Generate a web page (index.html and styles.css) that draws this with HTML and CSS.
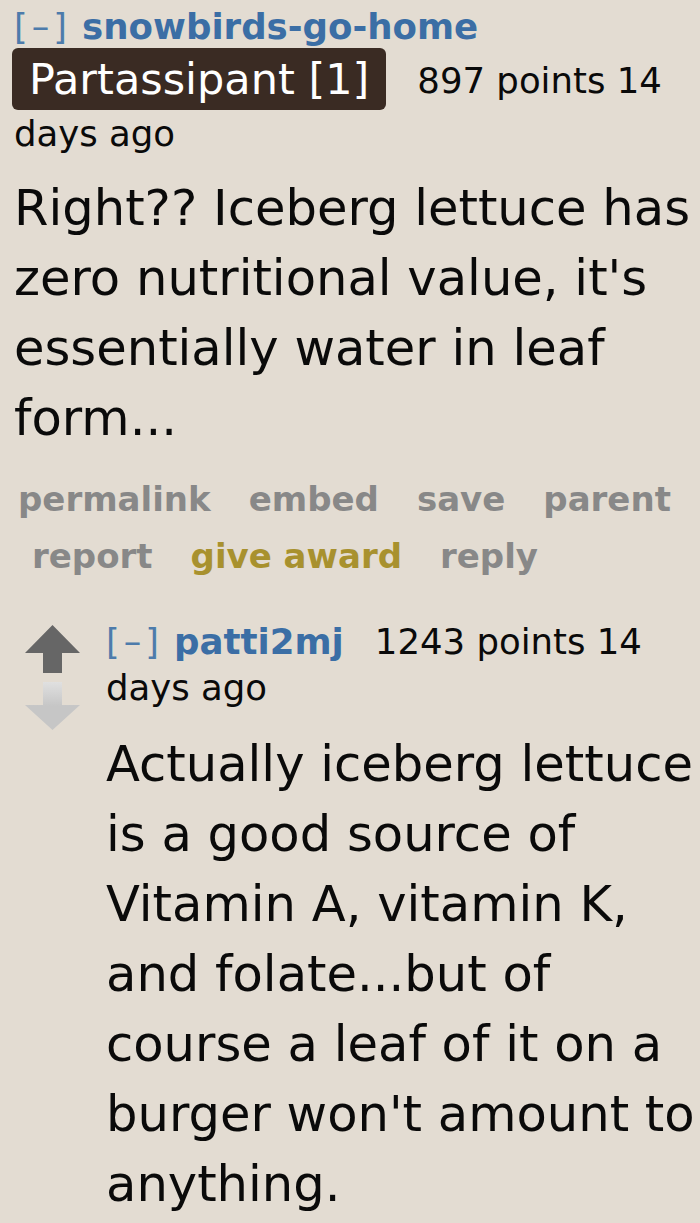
FILE: index.html
```html
<!DOCTYPE html>
<html>
<head>
<meta charset="utf-8">
<link rel="stylesheet" href="styles.css">
</head>
<body>
<div class="comment">
  <p class="tagline">
    <span class="expand">[–]</span> <span class="author">snowbirds-go-home</span>
    <span class="flair">Partassipant [1]</span><span class="score">897 points 14 days ago</span>
  </p>
  <div class="md">Right?? Iceberg lettuce has zero nutritional value, it's essentially water in leaf form...</div>
  <ul class="buttons">
    <li>permalink</li>
    <li>embed</li>
    <li>save</li>
    <li>parent</li>
    <li>report</li>
    <li class="award">give award</li>
    <li>reply</li>
  </ul>
  <div class="child">
    <div class="votes">
      <svg class="arrow" width="55" height="48" viewBox="0 0 55 48"><polygon points="27.5,0 55,28 37,28 37,48 18,48 18,28 0,28" fill="#666"/></svg>
      <svg class="arrow" width="55" height="48" viewBox="0 0 55 48"><defs><linearGradient id="dg" x1="0" y1="0" x2="0" y2="1"><stop offset="0" stop-color="#e0e0e0"/><stop offset="0.5" stop-color="#c6c6c6"/><stop offset="1" stop-color="#c6c6c6"/></linearGradient></defs><polygon points="18,0 37,0 37,23 55,23 27.5,48 0,23 18,23" fill="url(#dg)"/></svg>
    </div>
    <div class="entry">
      <p class="tagline">
        <span class="expand">[–]</span> <span class="author">patti2mj</span><span class="score">1243 points 14 days ago</span>
      </p>
      <div class="md">Actually iceberg lettuce is a good source of Vitamin A, vitamin K, and folate...but of course a leaf of it on a burger won't amount to anything.</div>
    </div>
  </div>
</div>
</body>
</html>
```
FILE: styles.css
```css
html, body {
  margin: 0;
  padding: 0;
  background: #e3dcd2;
}
body {
  font-family: "DejaVu Sans", Verdana, sans-serif;
  color: #0a0a0a;
}
.comment {
  padding: 0 0 0 14px;
}
.tagline {
  margin: 0;
  font-size: 35.5px;
  line-height: 53px;
}
.expand {
  color: #4d7bab;
  font-size: 35px;
  letter-spacing: 4px;
}
.author {
  color: #3b6ea5;
  font-weight: bold;
  font-size: 35.6px;
}
.flair {
  display: inline-block;
  background: #3a2b23;
  color: #fff;
  font-size: 43px;
  line-height: 62px;
  padding: 0 17px;
  border-radius: 6px;
  margin: -11px 0 -3px -2px;
  vertical-align: middle;
}
.score {
  margin-left: 31px;
}
.md {
  font-size: 49.6px;
  line-height: 70px;
  margin-top: 13px;
}
.buttons {
  list-style: none;
  margin: 18px 0 0 4px;
  padding: 0;
  display: flex;
  flex-wrap: wrap;
  column-gap: 24px;
  font-weight: bold;
  font-size: 34px;
  line-height: 57px;
  color: #888;
}
.buttons li {
  padding-left: 14px;
}
.buttons li:first-child {
  padding-left: 0;
}
.buttons .award {
  color: #a8912e;
}
.child {
  display: flex;
  margin-top: 34px;
  padding-left: 11px;
}
.votes {
  display: flex;
  flex-direction: column;
  gap: 9px;
  width: 81px;
  flex: none;
  padding-top: 6px;
}
.arrow {
  display: block;
}
.entry {
  flex: 1;
}
.child .tagline {
  line-height: 45px;
}
.child .md {
  margin-top: 19px;
}
```
